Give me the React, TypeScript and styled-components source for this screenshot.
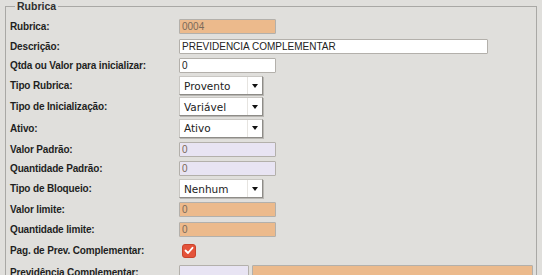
import React from "react";
import styled, { createGlobalStyle } from "styled-components";

const Global = createGlobalStyle`
  html, body { margin: 0; padding: 0; background: #e0dfdc; }
  body { font-family: "Liberation Sans", Arial, sans-serif; overflow: hidden; }
`;

const Page = styled.div`
  width: 542px;
  height: 275px;
  overflow: hidden;
  background: #e0dfdc;
`;

const Fieldset = styled.fieldset`
  margin: 0 5px 0 5px;
  padding: 5px 0 0 4px;
  border: 1px solid #a9a8a5;
  border-bottom: none;
  min-width: 0;
`;

const Legend = styled.legend`
  padding: 0 2px;
  margin-left: 5px;
  font-size: 10.5px;
  font-weight: bold;
  color: #2f2f2f;
  line-height: 12px;
`;

const Row = styled.div<{ $h: number }>`
  display: grid;
  grid-template-columns: 169px 1fr;
  align-items: center;
  height: ${(p) => p.$h}px;
`;

const Label = styled.label`
  font-size: 10px;
  font-weight: bold;
  color: #1f1f1f;
  letter-spacing: -0.15px;
  white-space: nowrap;
`;

const Field = styled.div`
  display: flex;
  align-items: center;
  gap: 3px;
`;

const Input = styled.div<{ $w: number; $bg: string }>`
  box-sizing: border-box;
  width: ${(p) => p.$w}px;
  height: 15px;
  background: ${(p) => p.$bg};
  border: 1px solid #b3b0ab;
  border-radius: 1px;
  font-size: 10px;
  line-height: 13px;
  padding-left: 2px;
  color: ${(p) => (p.$bg === "#ffffff" ? "#222" : "#7a6a5a")};
  white-space: nowrap;
  overflow: hidden;
`;

const Select = styled.div`
  box-sizing: border-box;
  width: 84px;
  height: 19px;
  display: flex;
  align-items: center;
  background: #fff;
  border: 1px solid #c9c7c3;
  border-right-color: #8e8c88;
  border-bottom-color: #8e8c88;
  box-shadow: 1px 1px 0 #b9b7b3;
  font-family: "DejaVu Sans", Verdana, sans-serif;
  font-size: 10.5px;
  color: #222;
  padding-left: 4px;
`;

const SelectText = styled.span`
  flex: 1;
`;

const Arrow = styled.span`
  width: 14px;
  height: 100%;
  display: flex;
  align-items: center;
  justify-content: center;
  border-left: 1px solid #e6e4e0;
  &::after {
    content: "";
    border-left: 3px solid transparent;
    border-right: 3px solid transparent;
    border-top: 4px solid #111;
  }
`;

const Check = styled.span`
  margin-left: 3px;
  width: 14px;
  height: 14px;
  border-radius: 3px;
  background: #e4533a;
  border: 1px solid #c9432c;
  box-sizing: border-box;
  display: flex;
  align-items: center;
  justify-content: center;
`;

const ORANGE = "#ecba8c";
const LAV = "#e8e4f3";
const WHITE = "#ffffff";

const Sel = ({ v }: { v: string }) => (
  <Select>
    <SelectText>{v}</SelectText>
    <Arrow />
  </Select>
);

export default function App() {
  return (
    <Page>
      <Global />
      <Fieldset>
        <Legend>Rubrica</Legend>
        <Row $h={19}>
          <Label>Rubrica:</Label>
          <Field><Input $w={97} $bg={ORANGE}>0004</Input></Field>
        </Row>
        <Row $h={20}>
          <Label>Descrição:</Label>
          <Field><Input $w={309} $bg={WHITE}>PREVIDENCIA COMPLEMENTAR</Input></Field>
        </Row>
        <Row $h={19}>
          <Label>Qtda ou Valor para inicializar:</Label>
          <Field><Input $w={97} $bg={WHITE}>0</Input></Field>
        </Row>
        <Row $h={21}>
          <Label>Tipo Rubrica:</Label>
          <Field><Sel v="Provento" /></Field>
        </Row>
        <Row $h={21}>
          <Label>Tipo de Inicialização:</Label>
          <Field><Sel v="Variável" /></Field>
        </Row>
        <Row $h={22}>
          <Label>Ativo:</Label>
          <Field><Sel v="Ativo" /></Field>
        </Row>
        <Row $h={20}>
          <Label>Valor Padrão:</Label>
          <Field><Input $w={97} $bg={LAV}>0</Input></Field>
        </Row>
        <Row $h={19}>
          <Label>Quantidade Padrão:</Label>
          <Field><Input $w={97} $bg={LAV}>0</Input></Field>
        </Row>
        <Row $h={21}>
          <Label>Tipo de Bloqueio:</Label>
          <Field><Sel v="Nenhum" /></Field>
        </Row>
        <Row $h={20}>
          <Label>Valor limite:</Label>
          <Field><Input $w={97} $bg={ORANGE}>0</Input></Field>
        </Row>
        <Row $h={21}>
          <Label>Quantidade limite:</Label>
          <Field><Input $w={97} $bg={ORANGE}>0</Input></Field>
        </Row>
        <Row $h={21}>
          <Label>Pag. de Prev. Complementar:</Label>
          <Field>
            <Check>
              <svg width="10" height="9" viewBox="0 0 10 9">
                <path d="M1.5 4.5 L4 7 L8.5 1.8" fill="none" stroke="#fff" strokeWidth="1.8" strokeLinecap="round" strokeLinejoin="round" />
              </svg>
            </Check>
          </Field>
        </Row>
        <Row $h={22}>
          <Label>Previdência Complementar:</Label>
          <Field>
            <Input $w={70} $bg={LAV} />
            <Input $w={281} $bg={ORANGE} />
          </Field>
        </Row>
      </Fieldset>
    </Page>
  );
}
